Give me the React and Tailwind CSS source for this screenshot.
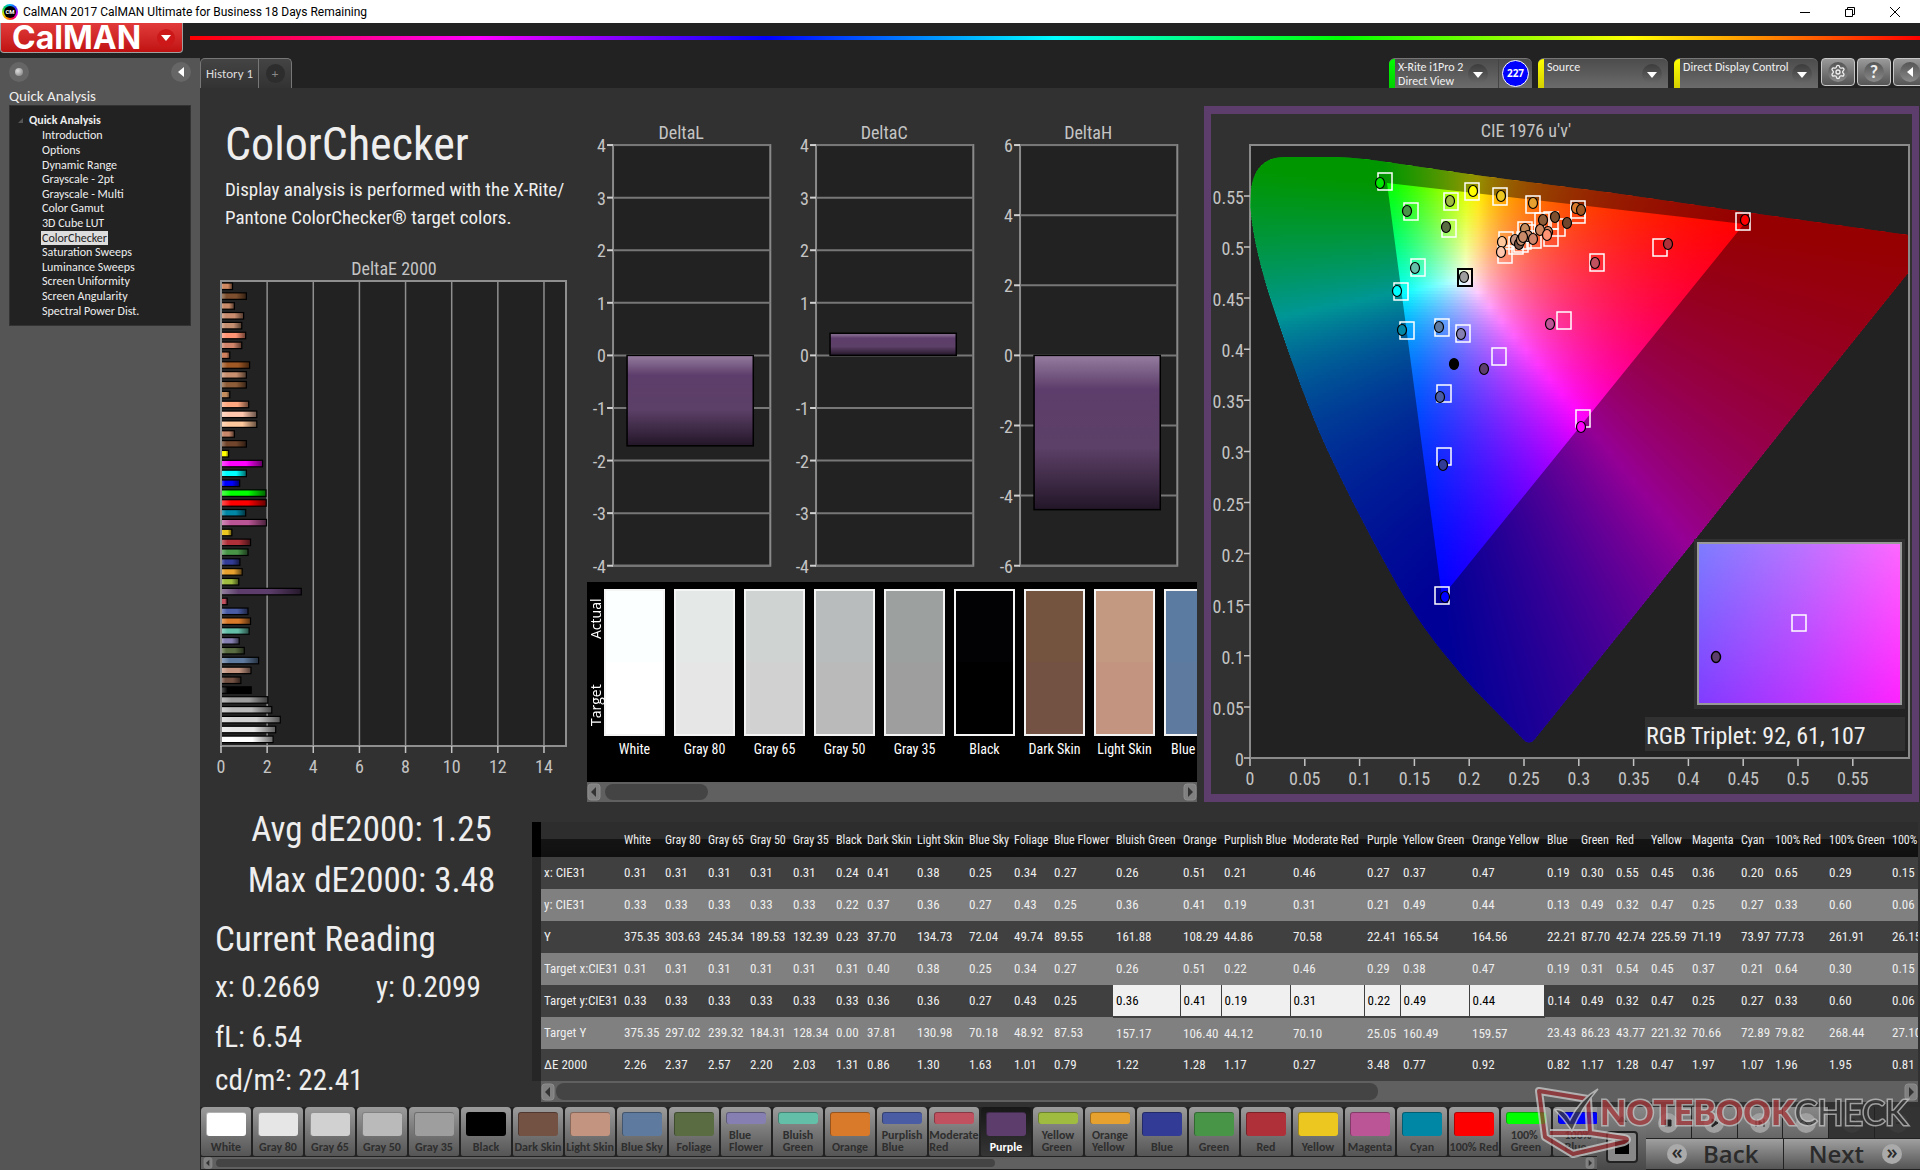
import React from "react";
import { Settings } from "lucide-react";

/* ---------- data ---------- */

const patches = [
  { name: "White", color: "#ffffff", actual: "#fbffff", v: ["0.31", "0.33", "375.35", "0.31", "0.33", "375.35", "2.26"], col: "w-[41px]" },
  { name: "Gray 80", color: "#e6e6e6", actual: "#e4e8e7", v: ["0.31", "0.33", "303.63", "0.31", "0.33", "297.02", "2.37"], col: "w-[43px]" },
  { name: "Gray 65", color: "#d1d1d1", actual: "#cfd3d2", v: ["0.31", "0.33", "245.34", "0.31", "0.33", "239.32", "2.57"], col: "w-[42px]" },
  { name: "Gray 50", color: "#bababa", actual: "#b8bcbd", v: ["0.31", "0.33", "189.53", "0.31", "0.33", "184.31", "2.20"], col: "w-[43px]" },
  { name: "Gray 35", color: "#9e9e9e", actual: "#9ca09f", v: ["0.31", "0.33", "132.39", "0.31", "0.33", "128.34", "2.03"], col: "w-[43px]" },
  { name: "Black", color: "#000000", actual: "#020205", v: ["0.24", "0.22", "0.23", "0.31", "0.33", "0.00", "1.31"], col: "w-[31px]" },
  { name: "Dark Skin", color: "#735143", actual: "#74533f", v: ["0.41", "0.37", "37.70", "0.40", "0.36", "37.81", "0.86"], col: "w-[50px]" },
  { name: "Light Skin", color: "#c39581", actual: "#c49981", v: ["0.38", "0.36", "134.73", "0.38", "0.36", "130.98", "1.30"], col: "w-[52px]" },
  { name: "Blue Sky", color: "#5e7a9e", actual: "#5b7ba0", v: ["0.25", "0.27", "72.04", "0.25", "0.27", "70.18", "1.63"], col: "w-[45px]" },
  { name: "Foliage", color: "#5a6c42", v: ["0.34", "0.43", "49.74", "0.34", "0.43", "48.92", "1.01"], col: "w-[40px]" },
  { name: "Blue Flower", color: "#8580b1", two: true, v: ["0.27", "0.25", "89.55", "0.27", "0.25", "87.53", "0.79"], col: "w-[62px]" },
  { name: "Bluish Green", color: "#64bfa9", two: true, v: ["0.26", "0.36", "161.88", "0.26", "0.36", "157.17", "1.22"], col: "w-[67px]", hi: true },
  { name: "Orange", color: "#d97a2a", v: ["0.51", "0.41", "108.29", "0.51", "0.41", "106.40", "1.28"], col: "w-[41px]", hi: true },
  { name: "Purplish Blue", color: "#4a5ca4", two: true, v: ["0.21", "0.19", "44.86", "0.22", "0.19", "44.12", "1.17"], col: "w-[69px]", hi: true },
  { name: "Moderate Red", color: "#c25160", two: true, v: ["0.46", "0.31", "70.58", "0.46", "0.31", "70.10", "0.27"], col: "w-[74px]", hi: true },
  { name: "Purple", color: "#5c3d6b", v: ["0.27", "0.21", "22.41", "0.29", "0.22", "25.05", "3.48"], col: "w-[36px]", hi: true },
  { name: "Yellow Green", color: "#9fbc40", two: true, v: ["0.37", "0.49", "165.54", "0.38", "0.49", "160.49", "0.77"], col: "w-[69px]", hi: true },
  { name: "Orange Yellow", color: "#e7a12f", two: true, v: ["0.47", "0.44", "164.56", "0.47", "0.44", "159.57", "0.92"], col: "w-[75px]", hi: true },
  { name: "Blue", color: "#323c96", v: ["0.19", "0.13", "22.21", "0.19", "0.14", "23.43", "0.82"], col: "w-[34px]" },
  { name: "Green", color: "#489548", v: ["0.30", "0.49", "87.70", "0.31", "0.49", "86.23", "1.17"], col: "w-[35px]" },
  { name: "Red", color: "#af3039", v: ["0.55", "0.32", "42.74", "0.54", "0.32", "43.77", "1.28"], col: "w-[35px]" },
  { name: "Yellow", color: "#ecc720", v: ["0.45", "0.47", "225.59", "0.45", "0.47", "221.32", "0.47"], col: "w-[41px]" },
  { name: "Magenta", color: "#bb5596", v: ["0.36", "0.25", "71.19", "0.37", "0.25", "70.66", "1.97"], col: "w-[49px]" },
  { name: "Cyan", color: "#0087a5", v: ["0.20", "0.27", "73.97", "0.21", "0.27", "72.89", "1.07"], col: "w-[34px]" },
  { name: "100% Red", color: "#ff0000", v: ["0.65", "0.33", "77.73", "0.64", "0.33", "79.82", "1.96"], col: "w-[54px]" },
  { name: "100% Green", color: "#00ff00", two: true, v: ["0.29", "0.60", "261.91", "0.30", "0.60", "268.44", "1.95"], col: "w-[63px]" },
  { name: "100% Blue", color: "#0000ff", two: true, v: ["0.15", "0.06", "26.15", "0.15", "0.06", "27.10", "0.81"], col: "w-auto" },
];

const rowNames = ["x: CIE31", "y: CIE31", "Y", "Target x:CIE31", "Target y:CIE31", "Target Y", "ΔE 2000"];

const deltaE = [
  [0.5, "#d08860"], [1.1, "#7d4f2e"], [0.58, "#c88a68"], [0.98, "#c98c6e"], [0.9, "#c48e70"], [1.07, "#ff9475"],
  [0.9, "#d0846a"], [0.38, "#d0805c"], [1.24, "#a05824"], [1.1, "#c8906f"], [1.1, "#8d5c38"], [0.38, "#c48c5c"],
  [1.2, "#ffa880"], [1.55, "#ffc8ae"], [1.55, "#ffc79c"], [0.58, "#c8876a"], [1.1, "#70452c"], [0.33, "#ffff00"],
  [1.8, "#ff00ff"], [1.1, "#00ffff"], [0.81, "#0000ff"], [1.95, "#00ff00"], [1.96, "#ff0000"], [1.07, "#0087a5"],
  [1.97, "#bb5596"], [0.47, "#ecc720"], [1.28, "#af3039"], [1.17, "#489548"], [0.82, "#323c96"], [0.92, "#e7a12f"],
  [0.77, "#9fbc40"], [3.48, "#5c3d6b"], [0.27, "#c25160"], [1.17, "#4a5ca4"], [1.28, "#d97a2a"], [1.22, "#64bfa9"],
  [0.79, "#8580b1"], [1.01, "#5a6c42"], [1.63, "#5e7a9e"], [1.3, "#c39581"], [0.86, "#735143"], [1.31, "#000000"],
  [2.03, "#9e9e9e"], [2.2, "#bababa"], [2.57, "#d1d1d1"], [2.37, "#e6e6e6"], [2.26, "#ffffff"],
];

const targets = [
  [174, 67], [200, 97], [240, 87], [238, 114], [261, 77], [289, 82], [322, 90], [367, 95], [367, 100], [532, 107],
  [449, 133], [386, 148], [207, 153], [190, 177], [196, 216], [231, 213], [252, 219], [288, 242], [353, 206],
  [233, 279], [372, 304], [233, 342], [231, 481], [295, 126], [294, 140], [305, 131], [313, 126], [323, 125],
  [340, 123], [340, 106], [331, 107], [347, 113], [314, 116], [317, 119], [310, 129],
];

const readings = [
  [169, 69, "#00e800"], [196, 97, "#489548"], [239, 87, "#9fbc40"], [235, 113, "#5a6c42"], [262, 77, "#ffff00"],
  [290, 82, "#ecc720"], [322, 89, "#e7a12f"], [365, 94, "#d97a2a"], [370, 96, "#a05824"], [534, 106, "#ff0000"],
  [457, 130, "#af3039"], [384, 149, "#c25160"], [204, 154, "#64bfa9"], [186, 177, "#00ffff"], [191, 216, "#0087a5"],
  [228, 213, "#5e7a9e"], [250, 220, "#8580b1"], [273, 255, "#5c3d6b"], [339, 210, "#bb5596"], [243, 250, "#000000"],
  [229, 283, "#4a5ca4"], [370, 313, "#ff00ff"], [253, 163, "#9e9e9e"], [332, 106, "#8d5c38"], [344, 103, "#7d4f2e"],
  [356, 109, "#70452c"], [314, 115, "#c48c5c"], [337, 118, "#d0805c"], [329, 116, "#d08860"], [336, 121, "#ff9475"],
  [291, 128, "#ffc79c"], [290, 138, "#ffc8ae"], [304, 126, "#c39581"], [308, 130, "#735143"], [310, 126, "#c8906f"],
  [317, 122, "#c98c6e"], [322, 125, "#d0846a"], [312, 123, "#c88a68"], [232, 351, "#323c96"], [234, 483, "#0000ff"],
];

const workflow = [
  "Introduction", "Options", "Dynamic Range", "Grayscale - 2pt", "Grayscale - Multi", "Color Gamut", "3D Cube LUT",
  "ColorChecker", "Saturation Sweeps", "Luminance Sweeps", "Screen Uniformity", "Screen Angularity", "Spectral Power Dist.",
];

/* ---------- chromaticity diagram ---------- */

const U = 1097;
const V = 1022;
const X0 = 39;
const Y0 = 644;
const LOCUS =
  "M39.5 93 L40 76 Q44 43 74 43 H127 Q150 44 182 49 L264 61 L402 79 L540 99 L697 121 V159 L595 286 L486 423 L323 626 Q318 631 313 626 L264 576 C240 548 215 520 191 479 C160 425 134 373 116 335 C98 296 80 245 66 204 C56 175 42 130 39.5 93 Z";
const GAMUT = "M176 69 L533 110 L231 483 Z";

// Brightest RGB colour with the chromaticity (u', v').
function chroma(u, v) {
  const d = 6 * u - 16 * v + 12;
  const x = (9 * u) / d;
  const y = Math.max((4 * v) / d, 0.001);
  const X = x / y;
  const Z = (1 - x - y) / y;
  const rgb = [
    3.2406 * X - 1.5372 - 0.4986 * Z,
    -0.9689 * X + 1.8758 + 0.0415 * Z,
    0.0557 * X - 0.204 + 1.057 * Z,
  ].map((c) => Math.max(c, 0));
  const m = Math.max(...rgb);
  return `rgb(${rgb.map((c) => Math.round((255 * c) / m)).join(",")})`;
}

const ROW = 3;
const bands = [];
for (let y = 42; y < 632; y += ROW) {
  const stops = [];
  for (let x = 39; x <= 698; x += 12) stops.push([x, chroma((x - X0) / U, (Y0 - y - ROW / 2) / V)]);
  bands.push({ y, stops });
}

const ticks = Array.from({ length: 12 }, (_, i) => String(Math.round(i * 5) / 100));
const axis = "fill-[#c4c4c4] text-[18px] font-['Roboto_Condensed','Open_Sans',sans-serif]";

function CieChart() {
  return (
    <svg viewBox="0 0 701 680" className="block w-full bg-[#313131]" role="img" aria-label="CIE 1976 u'v' chart">
      <defs>
        {bands.map((b) => (
          <linearGradient key={b.y} id={`band${b.y}`} gradientUnits="userSpaceOnUse" x1="39" x2="699" y1="0" y2="0">
            {b.stops.map(([x, c]) => (
              <stop key={x} offset={(x - 39) / 660} stopColor={c} />
            ))}
          </linearGradient>
        ))}
        <clipPath id="locus"><path d={LOCUS} /></clipPath>
        <linearGradient id="insetTop"><stop offset="0" stopColor="#7d7dff" /><stop offset=".5" stopColor="#b974ff" /><stop offset="1" stopColor="#ff68ff" /></linearGradient>
        <linearGradient id="insetBottom"><stop offset="0" stopColor="#803cff" /><stop offset=".5" stopColor="#b934ff" /><stop offset="1" stopColor="#ff22ff" /></linearGradient>
        <linearGradient id="fade" x2="0" y2="1"><stop offset="0" stopColor="#000" /><stop offset="1" stopColor="#fff" /></linearGradient>
        <mask id="insetMask" maskContentUnits="objectBoundingBox"><rect width="1" height="1" fill="url(#fade)" /></mask>
      </defs>
      <text x="315" y="23" textAnchor="middle" className={axis}>CIE 1976 u'v'</text>
      <rect x="39" y="31" width="659" height="613" fill="#222" stroke="#8a8a8a" strokeWidth="2" />
      <g clipPath="url(#locus)">
        {bands.map((b) => (
          <rect key={b.y} x="39" y={b.y} width="660" height={ROW + 1} fill={`url(#band${b.y})`} />
        ))}
        <path d={`M39 32 H698 V643 H39 Z ${GAMUT}`} fillRule="evenodd" fill="#000" opacity=".41" />
      </g>
      {targets.map(([x, y], i) => (
        <rect key={i} x={x - 7} y={y - 8} width="14" height="17" fill="none" stroke="#fff" strokeWidth="1.5" />
      ))}
      <rect x="247" y="155" width="14" height="17" fill="none" stroke="#000" strokeWidth="2" />
      {readings.map(([x, y, c], i) => (
        <ellipse key={i} cx={x} cy={y} rx="4.5" ry="5.5" fill={c} stroke="#000" strokeWidth="1.2" />
      ))}
      {ticks.map((t, i) => (
        <g key={t}>
          <path d={`M${33} ${Y0 - i * 51.1} H39 M${39 + i * 54.8} 645 V652`} stroke="#c4c4c4" strokeWidth="1.5" />
          <text x="33" y={Y0 + 8 - i * 51.1} textAnchor="end" className={axis}>{t}</text>
          <text x={39 + i * 54.8} y="671" textAnchor="middle" className={axis}>{t}</text>
        </g>
      ))}
      <rect x="483" y="425" width="211" height="170" fill="#303030" />
      <rect x="487" y="429" width="203" height="161" fill="url(#insetTop)" />
      <rect x="487" y="429" width="203" height="161" fill="url(#insetBottom)" mask="url(#insetMask)" />
      <rect x="487" y="429" width="203" height="161" fill="none" stroke="#999" strokeWidth="2" />
      <rect x="581" y="501" width="14" height="16" fill="none" stroke="#fff" strokeWidth="1.5" />
      <ellipse cx="505" cy="543" rx="4.5" ry="5.5" fill="#5c3d6b" stroke="#000" strokeWidth="1.5" />
      <rect x="434" y="603" width="260" height="34" fill="#313131" />
      <text x="435" y="630" className="fill-[#f0f0f0] text-[24px] font-['Roboto_Condensed','Open_Sans',sans-serif]">RGB Triplet: 92, 61, 107</text>
    </svg>
  );
}

/* ---------- bar charts ---------- */

function DeltaEChart() {
  const unit = 23.07;
  return (
    <svg viewBox="0 0 387 534" className="mt-[18px] block w-full" role="img" aria-label="DeltaE 2000 chart">
      <defs>
        <linearGradient id="shine">
          <stop offset="0" stopColor="#fff" stopOpacity=".35" />
          <stop offset=".22" stopColor="#fff" stopOpacity="0" />
          <stop offset=".6" stopColor="#000" stopOpacity="0" />
          <stop offset="1" stopColor="#000" stopOpacity=".6" />
        </linearGradient>
      </defs>
      <text x="194" y="25" textAnchor="middle" className={axis}>DeltaE 2000</text>
      <rect x="21" y="31" width="345" height="465" fill="#222" stroke="#8f8f8f" strokeWidth="2" />
      {[0, 2, 4, 6, 8, 10, 12, 14].map((t) => (
        <g key={t}>
          {t > 0 && <path d={`M${21 + t * unit} 31 V496`} stroke="#8f8f8f" strokeWidth="1.5" />}
          <path d={`M${21 + t * unit} 496 V503`} stroke="#c4c4c4" strokeWidth="1.5" />
          <text x={21 + t * unit} y="523" textAnchor="middle" className={axis}>{t}</text>
        </g>
      ))}
      {deltaE.map(([v, c], i) => (
        <g key={i}>
          <rect x="21" y={33 + i * 9.85} width={v * unit} height="6.5" fill={c} />
          <rect x="21" y={33 + i * 9.85} width={v * unit} height="6.5" fill="url(#shine)" stroke="#000" strokeWidth="1.2" />
        </g>
      ))}
      <path d="M21 31 V496" stroke="#8f8f8f" strokeWidth="2" />
    </svg>
  );
}

function DeltaChart({ title, max, step, value }) {
  const h = 420;
  const zero = 35 + h / 2;
  const px = h / (2 * max);
  const marks = [];
  for (let t = max; t >= -max; t -= step) marks.push(t);
  const top = value > 0 ? zero - value * px : zero;
  return (
    <svg viewBox="0 0 203 471" className="block w-full" role="img" aria-label={`${title} chart`}>
      <defs>
        <linearGradient id="barFill" x2="0" y2="1">
          <stop offset="0" stopColor="#957d9f" />
          <stop offset=".22" stopColor="#5d3d6b" />
          <stop offset=".6" stopColor="#5c4067" />
          <stop offset="1" stopColor="#231628" />
        </linearGradient>
      </defs>
      <text x="94" y="29" textAnchor="middle" className={axis}>{title}</text>
      <rect x="26" y="35" width="157" height={h} fill="#222" stroke="#8a8a8a" strokeWidth="2" />
      {marks.map((t) => (
        <g key={t}>
          <path d={`M26 ${zero - t * px} H183`} stroke="#777" strokeWidth="2" />
          <path d={`M20 ${zero - t * px} H26`} stroke="#d0d0d0" strokeWidth="2" />
          <text x="19" y={zero - t * px + 7} textAnchor="end" className={axis}>{t}</text>
        </g>
      ))}
      <rect x="40" y={top} width="126" height={Math.abs(value) * px} fill="url(#barFill)" stroke="#000" strokeWidth="1.5" />
    </svg>
  );
}

/* ---------- small parts ---------- */

function Arrow({ dir }) {
  return (
    <svg viewBox="0 0 14 18" className="h-full max-h-[18px] w-[14px] shrink-0" aria-hidden="true">
      <rect x="1" y="1" width="12" height="16" rx="3" fill="#808080" stroke="#8c8c8c" />
      <path d={dir === "left" ? "M9 4 V14 L4 9 Z" : "M5 4 V14 L10 9 Z"} fill="#333" />
    </svg>
  );
}

function ScrollBar({ height, thumb, label }) {
  return (
    <div className={`flex items-center bg-[#606060] ${height}`} role="group" aria-label={label}>
      <button aria-label="Scroll left" className="flex h-full items-center"><Arrow dir="left" /></button>
      <div className="h-full flex-1 px-px py-0.5"><div className={`h-full rounded-lg bg-[#444] ${thumb}`} /></div>
      <button aria-label="Scroll right" className="flex h-full items-center"><Arrow dir="right" /></button>
    </div>
  );
}

function Drop() {
  return (
    <span className="flex size-[20px] shrink-0 items-center justify-center rounded-full bg-linear-to-b from-[#3c3c3c] to-[#686868]">
      <svg viewBox="0 0 10 6" className="mt-0.5 w-[10px]" aria-hidden="true"><path d="M0 0 H10 L5 6 Z" fill="#fff" /></svg>
    </span>
  );
}

function SelectBox({ label, width }) {
  return (
    <div className={`relative flex h-[30px] items-start overflow-hidden rounded-t-md border-t border-[#777] bg-linear-to-b from-[#4c4c4c] to-[#6b6b6b] ${width}`}>
      <span className="h-full w-[6px] shrink-0 bg-linear-to-b from-[#ffff00] to-[#d4cf00]" />
      <select aria-label={label} className="h-[30px] flex-1 appearance-none bg-transparent pb-[15px] pl-[3px] text-[12px] leading-[14px] text-[#f0f0f0]">
        <option>{label}</option>
      </select>
      <span className="pointer-events-none absolute top-[5px] right-[6px]"><Drop /></span>
    </div>
  );
}

function ToolButton({ label, children }) {
  return (
    <button aria-label={label} className="flex h-[28px] w-[34px] shrink-0 items-center justify-center rounded-[4px] border border-[#c8c8c8] bg-linear-to-b from-[#9a9a9a] to-[#555]">
      <span className="flex size-[20px] items-center justify-center rounded-full bg-linear-to-b from-[#555] to-[#8a8a8a] text-[#eee]">{children}</span>
    </button>
  );
}

function Chip({ patch }) {
  const active = patch.name === "Purple";
  return (
    <button
      className={`flex h-[49px] w-[50px] shrink-0 flex-col items-center justify-between rounded-t-[4px] rounded-b-[2px] pt-[5px] pb-[3px] text-[12px] leading-[12px] font-bold ${
        active ? "bg-linear-to-b from-[#181818] to-[#353535] text-white" : "bg-linear-to-b from-[#9c9c9c] to-[#555] text-[#2e2e2e]"
      }`}
    >
      <span
        className={`w-[40px] rounded-[3px] border-t border-l border-black/30 ${patch.two ? "h-[12px]" : "h-[24px]"}`}
        style={{ backgroundColor: patch.color }}
      />
      <span className={patch.two ? "w-min text-left" : "whitespace-nowrap"}>{patch.name}</span>
    </button>
  );
}

function Watermark() {
  return (
    <svg viewBox="0 0 384 76" className="pointer-events-none absolute right-[4px] bottom-[9px] w-[384px] opacity-75" role="img" aria-label="Notebookcheck">
      <g fill="none" strokeLinejoin="round">
        <path d="M7 6 L56 14 L58 48 L92 53 Q98 54 92 57 L41 69 L13 52 Z M18 48 L58 48" stroke="#ccc" strokeWidth="8" />
        <path d="M7 6 L56 14 L58 48 L92 53 Q98 54 92 57 L41 69 L13 52 Z M18 48 L58 48" stroke="#9c3236" strokeWidth="4" />
      </g>
      <path d="M23 25 Q31 22 38 35 Q48 14 66 4 Q50 22 40 46 Q32 34 23 25 Z" fill="#3a3a3a" stroke="#ccc" strokeWidth="1.5" />
      <text x="68" y="40" className="text-[34px] font-black font-['Lato',sans-serif]" strokeWidth="3" stroke="#c4c4c4" paintOrder="stroke" fill="#a8393c">
        NOTEBOOK<tspan fill="#333" fontWeight="400">CHECK</tspan>
      </text>
    </svg>
  );
}

const transport = [
  ["Stop", "M5 5 H11 V11 H5 Z"],
  ["Play", "M6 4 L12 8 L6 12 Z"],
  ["Step", "M4 4 V12 M12 4 V12 M7 6 L10 8 L7 10 Z"],
  ["Continuous", "M2 8 Q5 3 8 8 T14 8"],
  ["Refresh", "M4 6 Q8 2 12 6 M12 10 Q8 14 4 10"],
  ["Options", "M6 8 H10"],
];

/* ---------- page ---------- */

export default function App() {
  return (
    <div className="relative flex min-h-screen flex-col overflow-hidden bg-[#222] font-['Carlito','Lato',sans-serif]">
      <div className="flex h-[23px] items-center bg-white pr-5 pl-0.5 text-[12px] text-black font-['Roboto',sans-serif]">
        <span className="flex size-[16px] items-center justify-center rounded-full bg-[conic-gradient(#00b0ff,#3030ff,#c000ff,#ff0040,#ff9000,#d0e000,#00d060,#00b0ff)]">
          <span className="flex size-[12px] items-center justify-center rounded-full bg-black text-[6px] font-bold text-white">CM</span>
        </span>
        <span className="ml-[5px] flex-1">CalMAN 2017 CalMAN Ultimate for Business 18 Days Remaining</span>
        <div className="flex gap-[35px]">
          <button aria-label="Minimize"><svg viewBox="0 0 10 10" className="size-[10px]"><path d="M0 5.5 H10" stroke="#000" /></svg></button>
          <button aria-label="Restore"><svg viewBox="0 0 10 10" className="size-[10px]" fill="none" stroke="#000"><path d="M.5 2.5 H7.5 V9.5 H.5 Z M2.5 2.5 V.5 H9.5 V7.5 H7.5" /></svg></button>
          <button aria-label="Close"><svg viewBox="0 0 10 10" className="size-[10px]"><path d="M0 0 L10 10 M10 0 L0 10" stroke="#000" /></svg></button>
        </div>
      </div>

      <header className="flex h-[35px] items-start">
        <button className="flex h-[30px] w-[183px] shrink-0 items-center justify-between rounded-b-[4px] border border-t-0 border-[#a0a0a0] bg-linear-to-b from-[#e23a3a] to-[#c01010] pr-[7px] pl-[11px]">
          <span className="text-[32px] leading-[28px] font-bold text-white font-['Inter',sans-serif]">CalMAN</span>
          <span className="flex size-[18px] items-center justify-center rounded-full bg-[#cc1818]">
            <svg viewBox="0 0 10 6" className="w-[10px]" aria-hidden="true"><path d="M0 0 H10 L5 6 Z" fill="#fff" /></svg>
          </span>
        </button>
        <div className="mt-[13px] ml-[7px] h-[4px] flex-1 bg-[linear-gradient(to_right,#f00,#f0f,#00f,#0ff,#0f0,#ff0,#f00)]" />
      </header>

      <div className="flex flex-1">
        <aside className="w-[200px] shrink-0 bg-[#555] px-[9px] pt-1 text-[#eee]">
          <div className="flex items-center justify-between">
            <button aria-label="Pin" className="flex size-[20px] items-center justify-center rounded-full bg-[#666]">
              <span className="size-[8px] rounded-full bg-[radial-gradient(circle_at_35%_35%,#ddd,#777)]" />
            </button>
            <button aria-label="Collapse" className="flex size-[20px] items-center justify-center rounded-full bg-[#666]">
              <svg viewBox="0 0 6 10" className="h-[10px]" aria-hidden="true"><path d="M6 0 V10 L0 5 Z" fill="#fff" /></svg>
            </button>
          </div>
          <h2 className="mt-[5px] text-[15px] leading-[18px]">Quick Analysis</h2>
          <nav className="h-[221px] border border-[#333] bg-[#222] pt-[6px] text-[12px]" aria-label="Quick Analysis">
            <div className="flex items-center gap-[6px] pl-[8px] leading-[16px] font-bold">
              <svg viewBox="0 0 5 5" className="w-[5px]" aria-hidden="true"><path d="M5 0 V5 H0 Z" fill="#555" /></svg>
              Quick Analysis
            </div>
            <ul className="grid h-[190px] auto-rows-fr pl-[31px] leading-[14px]">
              {workflow.map((w) => (
                <li key={w} className="flex items-center">
                  <a href="#" className={w === "ColorChecker" ? "bg-[#ddd] px-px text-[#222]" : "px-px"}>{w}</a>
                </li>
              ))}
            </ul>
          </nav>
        </aside>

        <main className="flex min-w-0 flex-1 flex-col bg-[#313131]">
          <div className="flex h-[30px] shrink-0 items-start bg-[#222]">
            <div className="flex h-full rounded-t-[5px] border border-b-0 border-[#777] bg-linear-to-b from-[#444] to-[#333] text-[13px] text-[#ddd]">
              <button className="w-[58px] border-r border-[#777]">History 1</button>
              <button aria-label="Add history" className="flex w-[32px] items-center justify-center">
                <span className="flex size-[19px] items-center justify-center rounded-full bg-[#2d2d2d] text-[#888]">+</span>
              </button>
            </div>
            <div className="ml-auto flex h-full gap-[6px]">
              <div className="flex h-full w-[143px] overflow-hidden rounded-t-md border-t border-[#777] bg-linear-to-b from-[#4c4c4c] to-[#6b6b6b]">
                <span className="w-[6px] shrink-0 bg-linear-to-b from-[#00ff00] to-[#00d000]" />
                <button className="flex flex-1 items-center justify-between pr-[10px] pl-[3px] text-left text-[12px] leading-[14px] whitespace-nowrap text-[#f0f0f0]">
                  <span>X-Rite i1Pro 2<br />Direct View</span>
                  <Drop />
                </button>
                <span className="flex w-[34px] shrink-0 items-center justify-center border-l border-[#444]">
                  <span className="flex size-[27px] items-center justify-center rounded-full border border-white bg-[#0000ff] text-[10px] font-bold text-white font-['Open_Sans',sans-serif]">227</span>
                </span>
              </div>
              <SelectBox label="Source" width="w-[130px]" />
              <SelectBox label="Direct Display Control" width="w-[144px]" />
            </div>
            <div className="ml-[3px] flex w-[99px] gap-[2px] overflow-hidden">
              <ToolButton label="Settings"><Settings size={16} strokeWidth={2} /></ToolButton>
              <ToolButton label="Help"><span className="text-[18px] leading-none font-bold">?</span></ToolButton>
              <ToolButton label="Collapse panel"><svg viewBox="0 0 6 10" className="h-[10px]" aria-hidden="true"><path d="M6 0 V10 L0 5 Z" fill="#fff" /></svg></ToolButton>
            </div>
          </div>

          <section className="grid grid-cols-[387fr_610fr_723fr]">
            <div className="min-w-0 pt-[28px] font-['Roboto_Condensed','Open_Sans',sans-serif] text-[#eee]">
              <h1 className="pl-[25px] text-[46px] leading-[56px]">ColorChecker</h1>
              <p className="mt-[4px] pl-[25px] text-[19px] leading-[28px] whitespace-nowrap">
                Display analysis is performed with the X-Rite/<br />Pantone ColorChecker® target colors.
              </p>
              <DeltaEChart />
            </div>

            <div className="flex min-w-0 flex-col pt-[22px]">
              <div className="grid grid-cols-3">
                <DeltaChart title="DeltaL" max={4} step={1} value={-1.72} />
                <DeltaChart title="DeltaC" max={4} step={1} value={0.42} />
                <DeltaChart title="DeltaH" max={6} step={2} value={-4.4} />
              </div>
              <div className="flex h-[200px] overflow-hidden bg-black pt-[7px]">
                <div className="flex h-[147px] w-[17px] shrink-0 rotate-180 justify-between pt-[10px] pb-[10px] text-[14px] leading-[17px] text-white font-['Open_Sans',sans-serif] [writing-mode:vertical-rl]">
                  <span>Target</span><span>Actual</span>
                </div>
                <div className="flex gap-[9px]">
                  {patches.slice(0, 9).map((p) => (
                    <figure key={p.name} className="w-[61px] shrink-0">
                      <div className="flex h-[147px] flex-col border-2 border-[#f4f4f4]">
                        <div className="flex-1" style={{ backgroundColor: p.actual }} />
                        <div className="flex-1" style={{ backgroundColor: p.color }} />
                      </div>
                      <figcaption className="text-center text-[14px] leading-[26px] whitespace-nowrap text-white font-['Roboto_Condensed','Open_Sans',sans-serif]">{p.name}</figcaption>
                    </figure>
                  ))}
                </div>
              </div>
              <ScrollBar height="h-[20px]" thumb="ml-[3px] w-[103px]" label="Swatches scroll bar" />
            </div>

            <div className="min-w-0 pt-[18px] pr-px pl-[7px]">
              <div className="border-x-[7px] border-y-8 border-[#5c3d6b]"><CieChart /></div>
            </div>
          </section>

          <section className="flex pt-[20px]">
            <div className="w-[332px] shrink-0 pl-[15px] text-[#eee] font-['Roboto_Condensed','Open_Sans',sans-serif]">
              <div className="-mt-[18px] pr-[4px] text-center text-[35px] leading-[51px]">
                <p>Avg dE2000: 1.25</p>
                <p>Max dE2000: 3.48</p>
              </div>
              <h2 className="mt-[9px] text-[35px] leading-[50px]">Current Reading</h2>
              <div className="flex text-[29px] leading-[44px]">
                <span className="w-[161px]">x: 0.2669</span>
                <span>y: 0.2099</span>
              </div>
              <p className="mt-[6px] text-[29px] leading-[44px]">fL: 6.54</p>
              <p className="text-[29px] leading-[42px]">cd/m²: 22.41</p>
            </div>

            <div className="min-w-0 flex-1 pr-[2px]">
              <table className="w-full table-fixed border-collapse text-left text-[13px] text-[#eee] font-['Roboto_Condensed','Open_Sans',sans-serif]">
                <colgroup>
                  <col className="w-[9px]" />
                  <col className="w-[80px]" />
                  {patches.map((p) => <col key={p.name} className={p.col} />)}
                </colgroup>
                <thead>
                  <tr className="h-[35px] bg-[linear-gradient(#2d2d2d_50%,#141414_50%,#101010)]">
                    <td className="bg-black" />
                    <td />
                    {patches.map((p) => (
                      <th key={p.name} scope="col" className="overflow-hidden p-0 pl-[3px] text-[12px] font-normal whitespace-nowrap">{p.name}</th>
                    ))}
                  </tr>
                </thead>
                <tbody>
                  {rowNames.map((r, i) => (
                    <tr key={r} className={`h-[32px] ${i % 2 ? "bg-[#808080]" : "bg-[#404040]"}`}>
                      <td className="bg-[#262626]" />
                      <th scope="row" className="overflow-hidden p-0 pl-[3px] font-normal whitespace-nowrap">{r}</th>
                      {patches.map((p) => (
                        <td
                          key={p.name}
                          className={`overflow-hidden p-0 pl-[3px] whitespace-nowrap ${
                            p.hi && i === 4 ? "border-r border-b-2 border-[#404040] bg-[#f0f0f0] text-black" : ""
                          }`}
                        >
                          {p.v[i]}
                        </td>
                      ))}
                    </tr>
                  ))}
                </tbody>
              </table>
              <div className="pl-[9px]">
                <ScrollBar height="h-[21px]" thumb="w-[61%]" label="Table scroll bar" />
              </div>
            </div>
          </section>

          <footer className="mt-auto flex h-[63px] bg-[#222]">
            <div className="min-w-0 flex-1 overflow-hidden pl-px">
              <div className="flex gap-[2px]">{patches.map((p) => <Chip key={p.name} patch={p} />)}</div>
              <div className="mt-px"><ScrollBar height="h-[12px]" thumb="w-[57%]" label="Patches scroll bar" /></div>
            </div>
            <div className="flex w-[49px] shrink-0 flex-col items-center bg-linear-to-b from-[#888] to-[#484848]">
              <button aria-label="Up" className="h-[24px]"><svg viewBox="0 0 10 6" className="w-[10px]"><path d="M0 6 H10 L5 0 Z" fill="#333" /></svg></button>
              <button aria-label="Pattern window" className="flex size-[32px] items-center justify-center rounded-[4px] border-2 border-[#222] bg-[#888]">
                <span className="h-[14px] w-[14px] bg-black" />
              </button>
            </div>
            <div className="flex w-[274px] shrink-0 flex-col gap-px pb-px">
              <div className="grid h-[31px] grid-cols-6 gap-px">
                {transport.map(([n, d], i) => (
                  <button key={n} aria-label={n} className={`flex items-center justify-center ${i < 4 ? "bg-linear-to-b from-[#888] to-[#666]" : "bg-[#333]"}`}>
                    <svg viewBox="0 0 20 20" className="size-[20px]" aria-hidden="true">
                      <circle cx="10" cy="10" r="10" fill={i < 4 ? "#a0a0a0" : "#3a3a3a"} />
                      <path d={d} transform="translate(2 2)" fill={i < 3 ? "#222" : "none"} stroke="#222" />
                    </svg>
                  </button>
                ))}
              </div>
              <div className="grid flex-1 grid-cols-2 gap-px text-[24px] font-semibold text-[#2b2b2b] font-['Open_Sans',sans-serif]">
                <button className="flex items-center justify-start gap-[16px] bg-linear-to-b from-[#a0a0a0] to-[#555] pl-[21px] leading-none">
                  <span className="flex size-[20px] items-center justify-center rounded-full bg-[#aaa] pb-1 text-[20px] leading-none">«</span>Back
                </button>
                <button className="flex items-center justify-end gap-[18px] bg-linear-to-b from-[#a0a0a0] to-[#555] pr-[18px] leading-none">
                  Next<span className="flex size-[20px] items-center justify-center rounded-full bg-[#aaa] pb-1 text-[20px] leading-none">»</span>
                </button>
              </div>
            </div>
          </footer>
        </main>
      </div>
      <Watermark />
    </div>
  );
}
